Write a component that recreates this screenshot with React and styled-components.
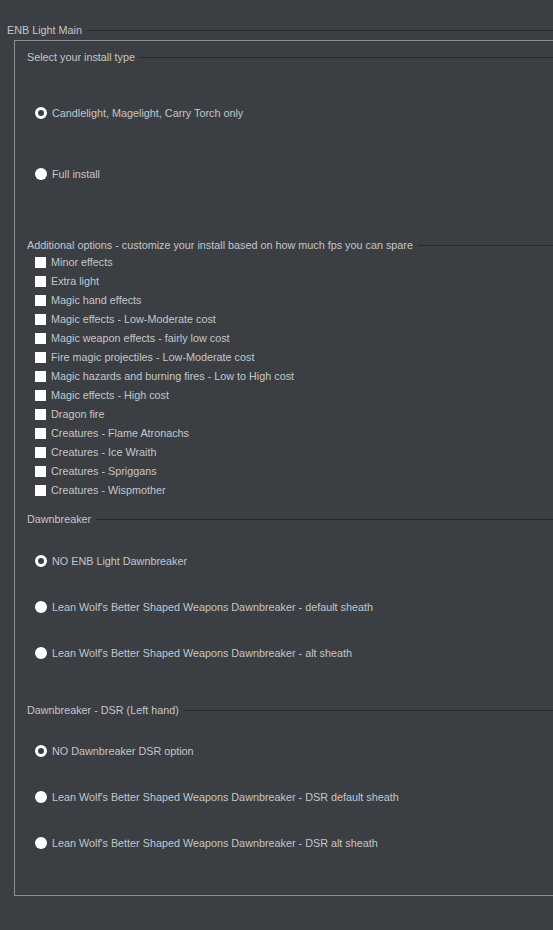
import React from "react";
import styled, { createGlobalStyle } from "styled-components";

const GlobalStyle = createGlobalStyle`
  html, body {
    margin: 0;
    padding: 0;
    background: #3b3e42;
    overflow: hidden;
  }
  body {
    font-family: "Liberation Sans", Arial, sans-serif;
    font-size: 10.8px;
    color: #c3c7cc;
  }
`;

const Page = styled.div`
  width: 553px;
  height: 930px;
  padding-top: 22px;
  box-sizing: border-box;
  overflow: hidden;
`;

const TitleRow = styled.div`
  display: flex;
  align-items: center;
  height: 16px;
  margin-left: ${(p) => p.$indent || 0}px;
  margin-top: ${(p) => p.$top || 0}px;
  white-space: nowrap;
  span {
    padding-right: 5px;
  }
  &::after {
    content: "";
    flex: 1;
    height: 1px;
    background: #26282a;
  }
`;

const Frame = styled.div`
  margin-left: 14px;
  margin-top: 2px;
  width: 560px;
  height: 856px;
  border: 1px solid #8b8d90;
  box-sizing: border-box;
  padding: 8px 0 0 12px;
`;

const Option = styled.label`
  display: flex;
  align-items: center;
  height: 16px;
  margin-top: ${(p) => p.$top || 0}px;
  margin-left: 8px;
  gap: 5px;
  white-space: nowrap;
`;

const Radio = styled.span`
  box-sizing: border-box;
  width: 12px;
  height: 12px;
  border-radius: 50%;
  background: ${(p) => (p.$checked ? "#3b3e42" : "#ffffff")};
  border: ${(p) => (p.$checked ? "3px solid #ffffff" : "none")};
  flex: none;
`;

const Check = styled.span`
  width: 11px;
  height: 11px;
  background: #ffffff;
  flex: none;
`;

const RadioOpt = ({ top, checked, children }) => (
  <Option $top={top}>
    <Radio $checked={checked} />
    {children}
  </Option>
);

const CheckOpt = ({ top, children }) => (
  <Option $top={top}>
    <Check />
    {children}
  </Option>
);

const extras = [
  "Minor effects",
  "Extra light",
  "Magic hand effects",
  "Magic effects - Low-Moderate cost",
  "Magic weapon effects - fairly low cost",
  "Fire magic projectiles - Low-Moderate cost",
  "Magic hazards and burning fires - Low to High cost",
  "Magic effects - High cost",
  "Dragon fire",
  "Creatures - Flame Atronachs",
  "Creatures - Ice Wraith",
  "Creatures - Spriggans",
  "Creatures - Wispmother",
];

export default function App() {
  return (
    <Page>
      <GlobalStyle />
      <TitleRow $indent={7}>
        <span>ENB Light Main</span>
      </TitleRow>
      <Frame>
        <TitleRow>
          <span>Select your install type</span>
        </TitleRow>
        <RadioOpt top={40} checked>
          Candlelight, Magelight, Carry Torch only
        </RadioOpt>
        <RadioOpt top={45}>Full install</RadioOpt>

        <TitleRow $top={55}>
          <span>Additional options - customize your install based on how much fps you can spare</span>
        </TitleRow>
        {extras.map((t, i) => (
          <CheckOpt key={t} top={i === 0 ? 1 : 3}>
            {t}
          </CheckOpt>
        ))}

        <TitleRow $top={13}>
          <span>Dawnbreaker</span>
        </TitleRow>
        <RadioOpt top={26} checked>
          NO ENB Light Dawnbreaker
        </RadioOpt>
        <RadioOpt top={30}>Lean Wolf's Better Shaped Weapons Dawnbreaker - default sheath</RadioOpt>
        <RadioOpt top={30}>Lean Wolf's Better Shaped Weapons Dawnbreaker - alt sheath</RadioOpt>

        <TitleRow $top={41}>
          <span>Dawnbreaker - DSR (Left hand)</span>
        </TitleRow>
        <RadioOpt top={25} checked>
          NO Dawnbreaker DSR option
        </RadioOpt>
        <RadioOpt top={30}>Lean Wolf's Better Shaped Weapons Dawnbreaker - DSR default sheath</RadioOpt>
        <RadioOpt top={30}>Lean Wolf's Better Shaped Weapons Dawnbreaker - DSR alt sheath</RadioOpt>
      </Frame>
    </Page>
  );
}
